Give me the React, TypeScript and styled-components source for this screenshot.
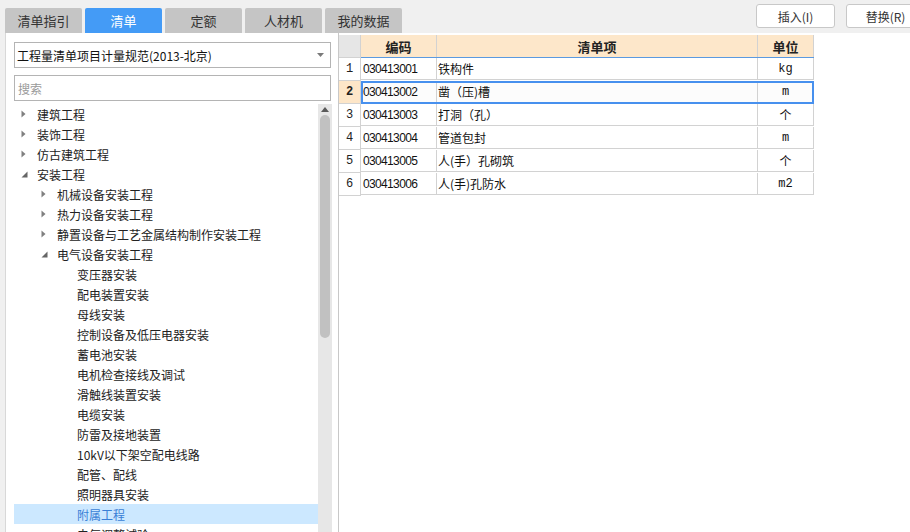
import styled, { createGlobalStyle } from 'styled-components';

const GlobalStyle = createGlobalStyle`
  html, body {
    margin: 0;
    padding: 0;
    background: #f0f0f0;
  }
  * {
    box-sizing: border-box;
  }
`;

const CJK = `"Noto Sans CJK SC", "Noto Sans", sans-serif`;
const MONO = `"Liberation Mono", "Noto Sans CJK SC", monospace`;
const NUM = `"Liberation Sans", "Noto Sans CJK SC", sans-serif`;

interface TreeNode {
  label: string;
  level: number;
  state?: 'open' | 'closed';
  selected?: boolean;
}

const tree: TreeNode[] = [
  { label: '建筑工程', level: 1, state: 'closed' },
  { label: '装饰工程', level: 1, state: 'closed' },
  { label: '仿古建筑工程', level: 1, state: 'closed' },
  { label: '安装工程', level: 1, state: 'open' },
  { label: '机械设备安装工程', level: 2, state: 'closed' },
  { label: '热力设备安装工程', level: 2, state: 'closed' },
  { label: '静置设备与工艺金属结构制作安装工程', level: 2, state: 'closed' },
  { label: '电气设备安装工程', level: 2, state: 'open' },
  { label: '变压器安装', level: 3 },
  { label: '配电装置安装', level: 3 },
  { label: '母线安装', level: 3 },
  { label: '控制设备及低压电器安装', level: 3 },
  { label: '蓄电池安装', level: 3 },
  { label: '电机检查接线及调试', level: 3 },
  { label: '滑触线装置安装', level: 3 },
  { label: '电缆安装', level: 3 },
  { label: '防雷及接地装置', level: 3 },
  { label: '10kV以下架空配电线路', level: 3 },
  { label: '配管、配线', level: 3 },
  { label: '照明器具安装', level: 3 },
  { label: '附属工程', level: 3, selected: true },
  { label: '电气调整试验', level: 3 },
];

const rows = [
  { code: '030413001', name: '铁构件', unit: 'kg' },
  { code: '030413002', name: '凿（压)槽', unit: 'm' },
  { code: '030413003', name: '打洞（孔）', unit: '个' },
  { code: '030413004', name: '管道包封', unit: 'm' },
  { code: '030413005', name: '人(手）孔砌筑', unit: '个' },
  { code: '030413006', name: '人(手)孔防水', unit: 'm2' },
];

const tabs = ['清单指引', '清单', '定额', '人材机', '我的数据'];

const App = () => {
  return (
    <Page>
      <GlobalStyle />
      <TopBar>
        <Tabs>
          {tabs.map((t, i) => (
            <Tab key={t} $active={i === 1}>{t}</Tab>
          ))}
        </Tabs>
        <Actions>
          <ActionButton>插入(I)</ActionButton>
          <ActionButton>替换(R)</ActionButton>
        </Actions>
      </TopBar>
      <Main>
        <LeftPanel>
          <Select>
            <span>工程量清单项目计量规范(2013-北京)</span>
            <svg width="7" height="4" viewBox="0 0 7 4">
              <path d="M0 0h7L3.5 4z" fill="#7a7a7a" />
            </svg>
          </Select>
          <Search placeholder="搜索" />
          <TreeWrap>
            <TreeList>
              {tree.map((n) => (
                <TreeItem key={n.label} $level={n.level} $selected={!!n.selected}>
                  <ArrowSlot>
                    {n.state === 'closed' && (
                      <svg width="5" height="8" viewBox="0 0 5 8">
                        <path d="M0.5 0.5L4.5 4L0.5 7.5z" fill="#808080" />
                      </svg>
                    )}
                    {n.state === 'open' && (
                      <svg width="7" height="7" viewBox="0 0 7 7">
                        <path d="M6.5 0.5V6.5H0.5z" fill="#666" />
                      </svg>
                    )}
                  </ArrowSlot>
                  {n.label}
                </TreeItem>
              ))}
            </TreeList>
            <ScrollTrack>
              <ScrollArrow>
                <svg width="8" height="5" viewBox="0 0 8 5">
                  <path d="M0 5L4 0L8 5z" fill="#5a5a5a" />
                </svg>
              </ScrollArrow>
              <ScrollThumb />
            </ScrollTrack>
          </TreeWrap>
        </LeftPanel>
        <GridArea>
          <Grid>
            <GridRow>
              <NumCell $header />
              <DataGroup $header>
                <HeadCell $w={76}>编码</HeadCell>
                <HeadCell $w={321}>清单项</HeadCell>
                <HeadCell $w={56}>单位</HeadCell>
              </DataGroup>
            </GridRow>
            {rows.map((r, i) => (
              <GridRow key={r.code}>
                <NumCell $current={i === 1}>{i + 1}</NumCell>
                <DataGroup $current={i === 1}>
                  <CodeCell>{r.code}</CodeCell>
                  <NameCell>{r.name}</NameCell>
                  <UnitCell>{r.unit}</UnitCell>
                </DataGroup>
              </GridRow>
            ))}
          </Grid>
        </GridArea>
      </Main>
    </Page>
  );
};

const Page = styled.div`
  width: 910px;
  height: 532px;
  overflow: hidden;
  display: flex;
  flex-direction: column;
  background: #f0f0f0;
  font-family: ${CJK};
  color: #222;
`;

const TopBar = styled.div`
  height: 33px;
  flex-shrink: 0;
  display: flex;
  padding-left: 5px;
`;

const Tabs = styled.div`
  display: flex;
  gap: 3px;
  align-self: flex-end;
`;

const Tab = styled.div<{ $active?: boolean }>`
  width: 77px;
  height: 25px;
  display: flex;
  align-items: center;
  justify-content: center;
  font-size: 13px;
  border-radius: 2px 2px 0 0;
  background: ${(p) => (p.$active ? '#449bf6' : '#c5c5c5')};
  color: ${(p) => (p.$active ? '#fff' : '#333')};
`;

const Actions = styled.div`
  display: flex;
  gap: 11px;
  margin-left: 354px;
  margin-top: 4px;
  flex-shrink: 0;
`;

const ActionButton = styled.button`
  width: 79px;
  height: 24px;
  flex-shrink: 0;
  background: #fff;
  border: 1px solid #c8c8c8;
  border-radius: 3px;
  font-family: ${CJK};
  font-size: 12px;
  color: #333;
  padding: 0;
`;

const Main = styled.div`
  flex: 1;
  min-height: 0;
  display: flex;
  padding-left: 5px;
`;

const LeftPanel = styled.div`
  width: 334px;
  flex-shrink: 0;
  background: #fff;
  border-left: 1px solid #d8d8d8;
  border-right: 1px solid #c8c8c8;
  padding: 9px 6px 0 8px;
  display: flex;
  flex-direction: column;
  overflow: hidden;
`;

const Select = styled.div`
  height: 26px;
  width: 317px;
  border: 1px solid #b4b4b4;
  display: flex;
  align-items: center;
  justify-content: space-between;
  padding: 0 6px 0 2px;
  font-size: 12px;
  color: #111;
  flex-shrink: 0;
`;

const Search = styled.input`
  height: 26px;
  width: 317px;
  margin-top: 7px;
  border: 1px solid #b4b4b4;
  padding: 0 3px;
  font-family: ${CJK};
  font-size: 12px;
  outline: none;
  flex-shrink: 0;
  &::placeholder {
    color: #9a9a9a;
  }
`;

const TreeWrap = styled.div`
  margin-top: 3px;
  flex: 1;
  min-height: 0;
  display: flex;
`;

const TreeList = styled.div`
  flex: 1;
  overflow: hidden;
`;

const TreeItem = styled.div<{ $level: number; $selected: boolean }>`
  height: 20px;
  display: flex;
  align-items: center;
  padding-left: ${(p) => 7 + (p.$level - 1) * 20}px;
  font-size: 12px;
  white-space: nowrap;
  background: ${(p) => (p.$selected ? '#cce8ff' : 'transparent')};
  color: ${(p) => (p.$selected ? '#3a7fd6' : '#222')};
`;

const ArrowSlot = styled.span`
  width: 16px;
  height: 20px;
  display: flex;
  align-items: center;
  flex-shrink: 0;
`;

const ScrollTrack = styled.div`
  width: 14px;
  flex-shrink: 0;
  background: #e7e7e7;
  display: flex;
  flex-direction: column;
  align-items: center;
`;

const ScrollArrow = styled.div`
  height: 11px;
  display: flex;
  align-items: center;
  justify-content: center;
`;

const ScrollThumb = styled.div`
  width: 10px;
  height: 223px;
  border-radius: 5px;
  background: #c1c1c1;
`;

const GridArea = styled.div`
  flex: 1;
  background: #fff;
  padding-top: 2px;
`;

const Grid = styled.div`
  display: flex;
  flex-direction: column;
  width: 475px;
`;

const GridRow = styled.div`
  display: flex;
  height: 23px;
`;

const NumCell = styled.div<{ $header?: boolean; $current?: boolean }>`
  width: 22px;
  flex-shrink: 0;
  display: flex;
  align-items: center;
  justify-content: center;
  border-right: 1px solid #d2d2d2;
  border-bottom: 1px solid #d2d2d2;
  background: ${(p) => (p.$header ? '#e6e6e6' : p.$current ? '#fde6c8' : '#fff')};
  font-family: ${MONO};
  font-size: 12px;
  font-weight: ${(p) => (p.$current ? 700 : 400)};
  color: #222;
`;

const DataGroup = styled.div<{ $header?: boolean; $current?: boolean }>`
  display: flex;
  background: ${(p) => (p.$header ? '#fde7ca' : p.$current ? '#fcfcfc' : '#fff')};
  border-bottom: 1px solid ${(p) => (p.$header ? '#5b9ae0' : 'transparent')};
  outline: ${(p) => (p.$current ? '2px solid #4790ee' : 'none')};
  outline-offset: -2px;
`;

const HeadCell = styled.div<{ $w: number }>`
  width: ${(p) => p.$w}px;
  display: flex;
  align-items: center;
  justify-content: center;
  border-right: 1px solid #d2d2d2;
  font-size: 13px;
  font-weight: 700;
  color: #222;
`;

const Cell = styled.div`
  display: flex;
  align-items: center;
  border-right: 1px solid #d2d2d2;
  border-bottom: 1px solid #d2d2d2;
  white-space: nowrap;
  color: #111;
`;

const CodeCell = styled(Cell)`
  width: 76px;
  padding-left: 2px;
  font-family: ${NUM};
  font-size: 12px;
  letter-spacing: -0.65px;
`;

const NameCell = styled(Cell)`
  width: 321px;
  padding-left: 1px;
  font-size: 12px;
`;

const UnitCell = styled(Cell)`
  width: 56px;
  justify-content: center;
  font-family: ${MONO};
  font-size: 12px;
`;

export default App;
